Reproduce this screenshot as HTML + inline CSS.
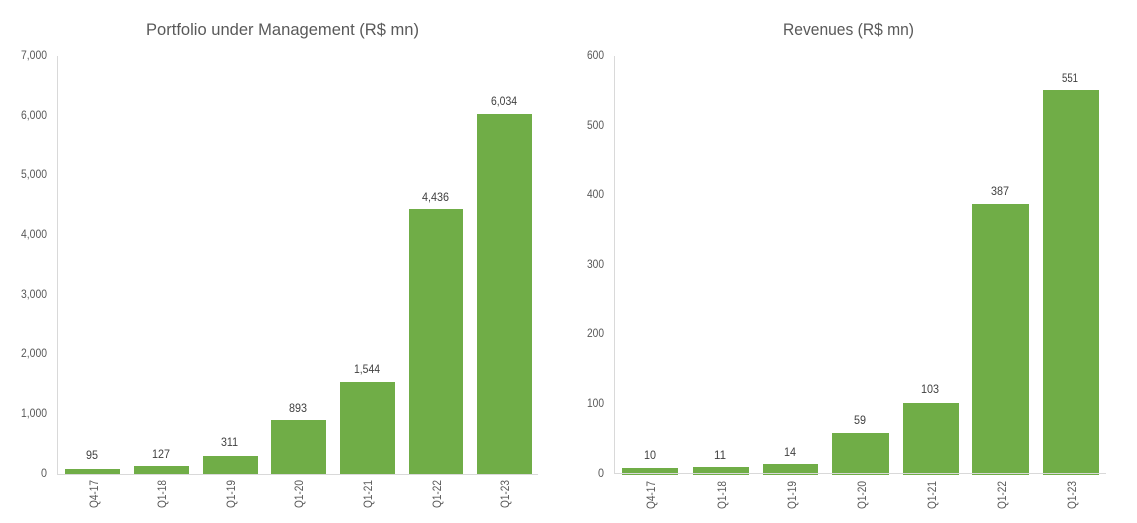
<!DOCTYPE html>
<html><head><meta charset="utf-8"><style>
html,body{margin:0;padding:0;background:#fff;width:1137px;height:523px;overflow:hidden}
svg{display:block}
text{font-family:"Liberation Sans",sans-serif}
.t{font-size:17px;fill:#595959}
.y{font-size:11.5px;fill:#595959}
.d{font-size:11.5px;fill:#404040}
.x{font-size:12px;fill:#595959}
</style></head><body>
<svg width="1137" height="523" viewBox="0 0 1137 523" xmlns="http://www.w3.org/2000/svg">
<rect width="1137" height="523" fill="#fff"/>
<text class="t" x="146" y="35" textLength="273" lengthAdjust="spacingAndGlyphs">Portfolio under Management (R$ mn)</text>
<g>
<text class="y" x="21" y="59" textLength="26" lengthAdjust="spacingAndGlyphs">7,000</text>
<text class="y" x="21" y="119" textLength="26" lengthAdjust="spacingAndGlyphs">6,000</text>
<text class="y" x="21" y="178" textLength="26" lengthAdjust="spacingAndGlyphs">5,000</text>
<text class="y" x="21" y="238" textLength="26" lengthAdjust="spacingAndGlyphs">4,000</text>
<text class="y" x="21" y="298" textLength="26" lengthAdjust="spacingAndGlyphs">3,000</text>
<text class="y" x="21" y="357" textLength="26" lengthAdjust="spacingAndGlyphs">2,000</text>
<text class="y" x="21" y="417" textLength="26" lengthAdjust="spacingAndGlyphs">1,000</text>
<text class="y" x="41" y="477" textLength="6" lengthAdjust="spacingAndGlyphs">0</text>
</g>
<g fill="#70ad47">
<rect x="65" y="469" width="55" height="5"/>
<rect x="134" y="466" width="55" height="8"/>
<rect x="203" y="456" width="55" height="18"/>
<rect x="271" y="420" width="55" height="54"/>
<rect x="340" y="382" width="55" height="92"/>
<rect x="409" y="209" width="54" height="265"/>
<rect x="477" y="114" width="55" height="360"/>
</g>
<rect x="57" y="56" width="1" height="419" fill="#d9d9d9"/>
<rect x="57" y="474" width="481" height="1" fill="#d9d9d9"/>
<g>
<text class="d" x="86" y="459" textLength="12" lengthAdjust="spacingAndGlyphs">95</text>
<text class="d" x="152" y="458" textLength="18" lengthAdjust="spacingAndGlyphs">127</text>
<text class="d" x="221" y="446" textLength="17" lengthAdjust="spacingAndGlyphs">311</text>
<text class="d" x="289" y="412" textLength="18" lengthAdjust="spacingAndGlyphs">893</text>
<text class="d" x="354" y="373" textLength="26" lengthAdjust="spacingAndGlyphs">1,544</text>
<text class="d" x="422" y="201" textLength="27" lengthAdjust="spacingAndGlyphs">4,436</text>
<text class="d" x="491" y="105" textLength="26" lengthAdjust="spacingAndGlyphs">6,034</text>
</g>
<g>
<text class="x" transform="translate(98,508) rotate(-90)" textLength="28" lengthAdjust="spacingAndGlyphs">Q4-17</text>
<text class="x" transform="translate(166,508) rotate(-90)" textLength="28" lengthAdjust="spacingAndGlyphs">Q1-18</text>
<text class="x" transform="translate(235,508) rotate(-90)" textLength="28" lengthAdjust="spacingAndGlyphs">Q1-19</text>
<text class="x" transform="translate(303,508) rotate(-90)" textLength="28" lengthAdjust="spacingAndGlyphs">Q1-20</text>
<text class="x" transform="translate(372,508) rotate(-90)" textLength="28" lengthAdjust="spacingAndGlyphs">Q1-21</text>
<text class="x" transform="translate(441,508) rotate(-90)" textLength="28" lengthAdjust="spacingAndGlyphs">Q1-22</text>
<text class="x" transform="translate(509,508) rotate(-90)" textLength="28" lengthAdjust="spacingAndGlyphs">Q1-23</text>
</g>

<text class="t" x="783" y="35" textLength="131" lengthAdjust="spacingAndGlyphs">Revenues (R$ mn)</text>
<g>
<text class="y" x="587" y="59" textLength="17" lengthAdjust="spacingAndGlyphs">600</text>
<text class="y" x="587" y="129" textLength="17" lengthAdjust="spacingAndGlyphs">500</text>
<text class="y" x="587" y="198" textLength="17" lengthAdjust="spacingAndGlyphs">400</text>
<text class="y" x="587" y="268" textLength="17" lengthAdjust="spacingAndGlyphs">300</text>
<text class="y" x="587" y="337" textLength="17" lengthAdjust="spacingAndGlyphs">200</text>
<text class="y" x="587" y="407" textLength="17" lengthAdjust="spacingAndGlyphs">100</text>
<text class="y" x="598" y="477" textLength="6" lengthAdjust="spacingAndGlyphs">0</text>
</g>
<g fill="#70ad47">
<rect x="622" y="468" width="56" height="7"/>
<rect x="693" y="467" width="56" height="8"/>
<rect x="763" y="464" width="55" height="11"/>
<rect x="832" y="433" width="57" height="42"/>
<rect x="903" y="403" width="56" height="72"/>
<rect x="972" y="204" width="57" height="271"/>
<rect x="1043" y="90" width="56" height="385"/>
</g>
<rect x="614" y="56" width="1" height="418" fill="#d9d9d9"/>
<rect x="614" y="473" width="492" height="1" fill="#d9d9d9"/>
<g>
<text class="d" x="644" y="459" textLength="12" lengthAdjust="spacingAndGlyphs">10</text>
<text class="d" x="714" y="459" textLength="12" lengthAdjust="spacingAndGlyphs">11</text>
<text class="d" x="784" y="456" textLength="12" lengthAdjust="spacingAndGlyphs">14</text>
<text class="d" x="854" y="424" textLength="12" lengthAdjust="spacingAndGlyphs">59</text>
<text class="d" x="921" y="393" textLength="18" lengthAdjust="spacingAndGlyphs">103</text>
<text class="d" x="991" y="195" textLength="18" lengthAdjust="spacingAndGlyphs">387</text>
<text class="d" x="1062" y="82" textLength="16" lengthAdjust="spacingAndGlyphs">551</text>
</g>
<g>
<text class="x" transform="translate(655,509) rotate(-90)" textLength="28" lengthAdjust="spacingAndGlyphs">Q4-17</text>
<text class="x" transform="translate(726,509) rotate(-90)" textLength="28" lengthAdjust="spacingAndGlyphs">Q1-18</text>
<text class="x" transform="translate(796,509) rotate(-90)" textLength="28" lengthAdjust="spacingAndGlyphs">Q1-19</text>
<text class="x" transform="translate(866,509) rotate(-90)" textLength="28" lengthAdjust="spacingAndGlyphs">Q1-20</text>
<text class="x" transform="translate(936,509) rotate(-90)" textLength="28" lengthAdjust="spacingAndGlyphs">Q1-21</text>
<text class="x" transform="translate(1006,509) rotate(-90)" textLength="28" lengthAdjust="spacingAndGlyphs">Q1-22</text>
<text class="x" transform="translate(1076,509) rotate(-90)" textLength="28" lengthAdjust="spacingAndGlyphs">Q1-23</text>
</g>
</svg>
</body></html>
